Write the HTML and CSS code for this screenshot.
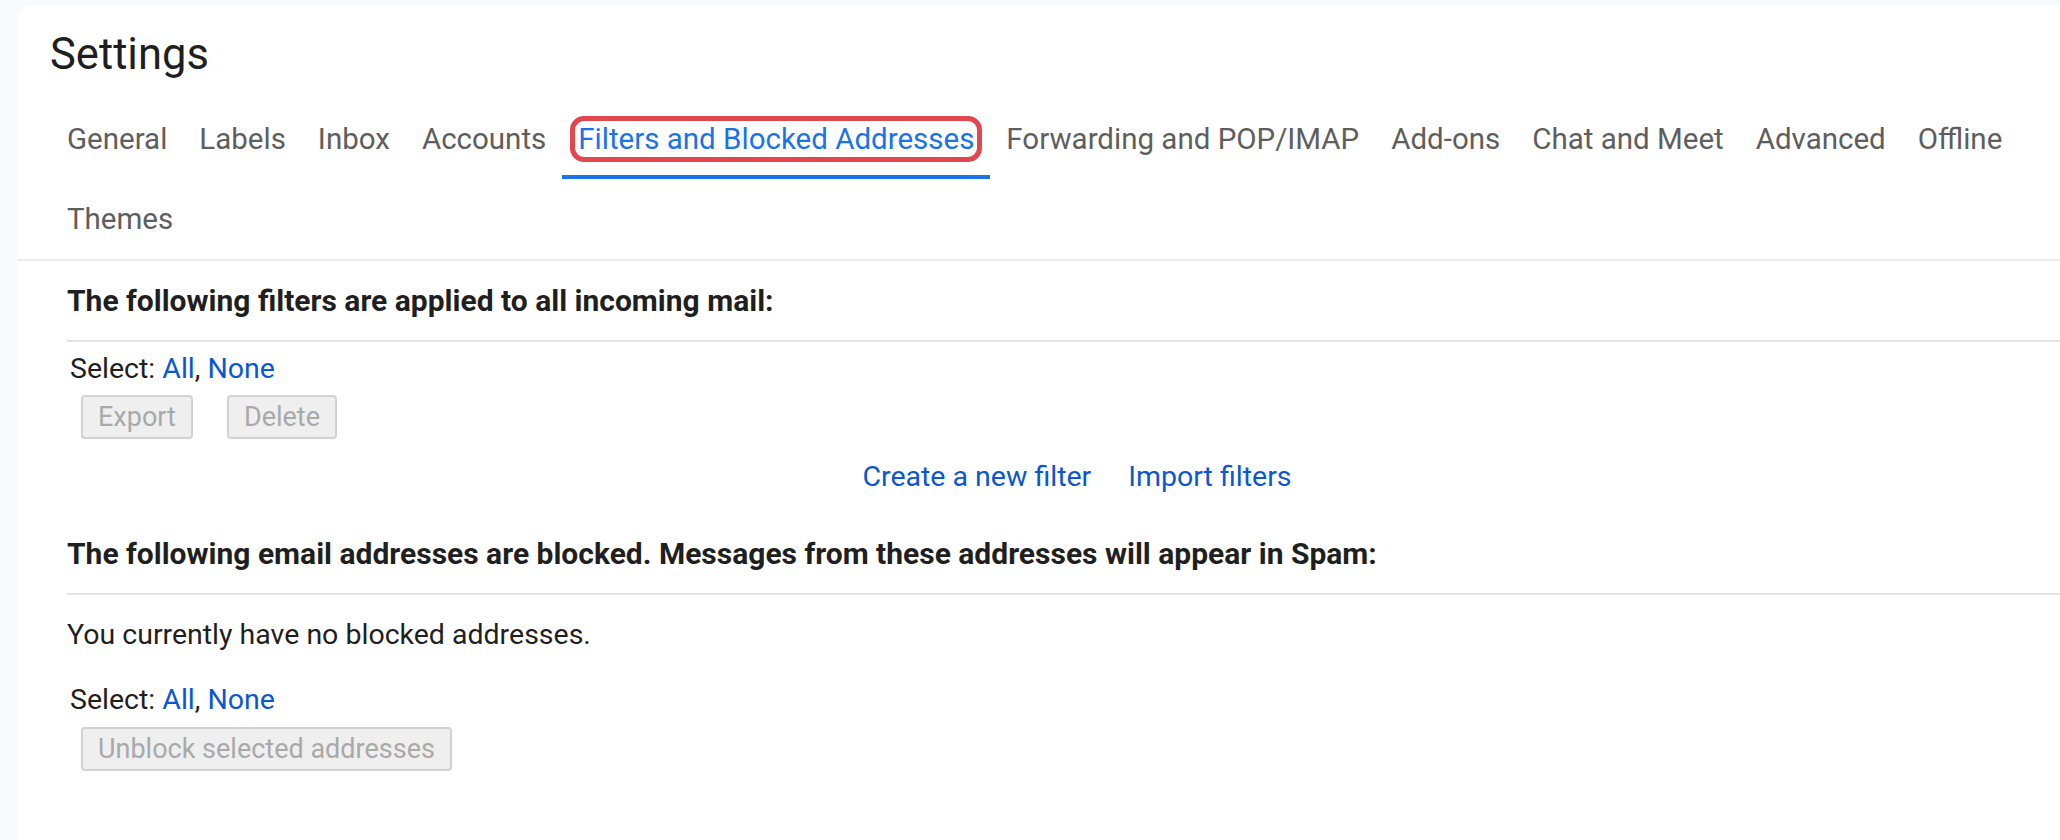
FILE: index.html
```html
<!DOCTYPE html>
<html lang="en">
<head>
<meta charset="utf-8">
<title>Settings</title>
<link rel="stylesheet" href="styles.css">
</head>
<body>
<div class="card">
  <h1 class="title">Settings</h1>
  <nav class="tabs">
    <div class="tab">General</div>
    <div class="tab">Labels</div>
    <div class="tab">Inbox</div>
    <div class="tab">Accounts</div>
    <div class="tab active"><span class="highlight">Filters and Blocked Addresses</span></div>
    <div class="tab">Forwarding and POP/IMAP</div>
    <div class="tab">Add-ons</div>
    <div class="tab">Chat and Meet</div>
    <div class="tab">Advanced</div>
    <div class="tab">Offline</div>
    <div class="tab">Themes</div>
  </nav>
  <section class="content">
    <h2 class="section-head">The following filters are applied to all incoming mail:</h2>
    <div class="select">Select: <a class="link">All</a>, <a class="link">None</a></div>
    <div class="buttons">
      <button class="btn" disabled>Export</button>
      <button class="btn" disabled>Delete</button>
    </div>
    <div class="links">
      <a class="link">Create a new filter</a>
      <a class="link">Import filters</a>
    </div>
    <h2 class="section-head second">The following email addresses are blocked. Messages from these addresses will appear in Spam:</h2>
    <p class="note">You currently have no blocked addresses.</p>
    <div class="select second">Select: <a class="link">All</a>, <a class="link">None</a></div>
    <div class="buttons single">
      <button class="btn" disabled>Unblock selected addresses</button>
    </div>
  </section>
</div>
</body>
</html>
```
FILE: styles.css
```css
html, body {
  margin: 0;
  padding: 0;
}
body {
  background: #f8fafd;
  font-family: Roboto, "Liberation Sans", Arial, sans-serif;
  color: #1f1f1f;
  overflow: hidden;
}
.card {
  margin: 5px 0 0 17px;
  background: #ffffff;
  border-top-left-radius: 18px;
  height: 835px;
}
.title {
  margin: 0;
  padding: 22px 0 16px 33px;
  font-size: 43.5px;
  line-height: 56px;
  font-weight: 400;
  color: #1f1f1f;
}
.tabs {
  display: flex;
  flex-wrap: wrap;
  padding-left: 34px;
  border-bottom: 2px solid #ececec;
}
.tab {
  height: 80px;
  box-sizing: border-box;
  padding: 0 16px;
  display: flex;
  align-items: center;
  font-size: 29.5px;
  color: #5e5e5e;
  white-space: nowrap;
}
.tab.active {
  color: #1a73e8;
  border-bottom: 4px solid #1a73e8;
  padding-top: 4px;
}
.highlight {
  border: 5px solid #e2474f;
  border-radius: 14px;
  padding: 0 3px;
  margin: 0 -8px;
  line-height: 36px;
}
.content {
  padding-left: 50px;
}
.section-head {
  margin: 0;
  padding: 22px 0 21px 0;
  font-size: 30px;
  line-height: 36px;
  font-weight: 700;
  color: #1f1f1f;
  border-bottom: 2px solid #e3e3e3;
}
.section-head.second {
  margin-top: 19px;
}
.select {
  margin-top: 9px;
  padding-left: 3px;
  font-size: 28.5px;
  line-height: 36px;
}
.select.second {
  margin-top: 29px;
}
.link {
  color: #0b57d0;
  text-decoration: none;
}
.buttons {
  display: flex;
  gap: 34px;
  margin-top: 8px;
  padding-left: 14px;
}
.buttons.single {
  margin-top: 9px;
}
.btn {
  height: 44px;
  box-sizing: border-box;
  padding: 0 15px;
  font-family: Roboto, "Liberation Sans", Arial, sans-serif;
  font-size: 27px;
  color: #a9a9a9;
  background: #efefef;
  border: 2px solid #d2d2d2;
  border-radius: 4px;
}
.links {
  display: flex;
  justify-content: center;
  gap: 37px;
  margin-top: 20px;
  padding-left: 27px;
  font-size: 28.5px;
  line-height: 36px;
}
.note {
  margin: 22px 0 0 0;
  font-size: 28.5px;
  line-height: 36px;
}
```
